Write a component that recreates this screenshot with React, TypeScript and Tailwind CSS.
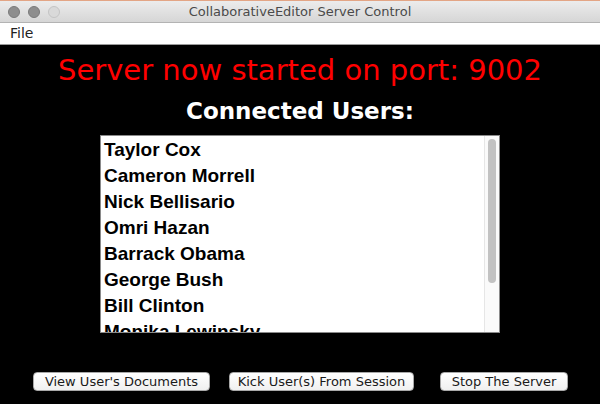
import { FC } from 'react';

const users = [
    'Taylor Cox',
    'Cameron Morrell',
    'Nick Bellisario',
    'Omri Hazan',
    'Barrack Obama',
    'George Bush',
    'Bill Clinton',
    'Monika Lewinsky',
];

const TitleBar: FC = () => (
    <div className="relative flex h-[23px] items-center justify-center border-t border-[#e3a585] border-b border-b-[#b3b3b3] bg-gradient-to-b from-[#ececec] to-[#d6d6d6]">
        <div className="absolute left-[8px] top-[5px] flex gap-[8px]">
            <span className="h-[12px] w-[12px] rounded-full border border-[#7a7a7a] bg-[#8e8e8e]" />
            <span className="h-[12px] w-[12px] rounded-full border border-[#7a7a7a] bg-[#8e8e8e]" />
            <span className="h-[12px] w-[12px] rounded-full border border-[#c4c4c4] bg-[#d9d9d9]" />
        </div>
        <span className="text-[13px] text-[#4a4a4a]" style={{ fontFamily: '"DejaVu Sans", sans-serif' }}>
            CollaborativeEditor Server Control
        </span>
    </div>
);

const MacButton: FC<{ label: string; width: string }> = ({ label, width }) => (
    <button
        className={`${width} h-[19px] rounded-[4px] border border-[#a8a8a8] bg-gradient-to-b from-white to-[#f0f0f0] text-[13px] leading-[16px] text-[#1a1a1a]`}
        style={{ fontFamily: '"DejaVu Sans", sans-serif' }}
    >
        {label}
    </button>
);

export default function App() {
    return (
        <div className="flex h-[404px] w-[600px] flex-col overflow-hidden bg-black">
            <TitleBar />
            <div className="flex h-[22px] items-center border-b border-[#9a9a9a] bg-white px-[10px]">
                <span className="text-[14px] text-[#222]" style={{ fontFamily: '"DejaVu Sans", sans-serif' }}>
                    File
                </span>
            </div>
            <div className="flex flex-1 flex-col items-center" style={{ fontFamily: '"DejaVu Sans", sans-serif' }}>
                <h1 className="mt-[7px] text-[29px] leading-[36px] text-[#ff0000]">Server now started on port: 9002</h1>
                <h2 className="mt-[9px] text-[23px] font-bold leading-[28px] text-white">Connected Users:</h2>
                <div className="mt-[10px] flex h-[198px] w-[400px] overflow-hidden border border-[#8a8a8a] bg-white">
                    <ul
                        className="flex-1 pl-[3px] pt-[1px] text-[19px] font-bold leading-[26px] text-black"
                        style={{ fontFamily: '"Liberation Sans", Arial, sans-serif' }}
                    >
                        {users.map((u) => (
                            <li key={u} className="whitespace-nowrap">{u}</li>
                        ))}
                    </ul>
                    <div className="flex w-[15px] justify-center border-l border-[#e6e6e6] bg-[#fafafa] pt-[3px]">
                        <div className="h-[144px] w-[8px] rounded-full bg-[#c2c2c2]" />
                    </div>
                </div>
                <div className="mt-auto mb-[13px] flex w-full items-center pl-[33px]">
                    <MacButton label="View User's Documents" width="w-[177px]" />
                    <div className="w-[19px]" />
                    <MacButton label="Kick User(s) From Session" width="w-[185px]" />
                    <div className="w-[26px]" />
                    <MacButton label="Stop The Server" width="w-[128px]" />
                </div>
            </div>
        </div>
    );
}
